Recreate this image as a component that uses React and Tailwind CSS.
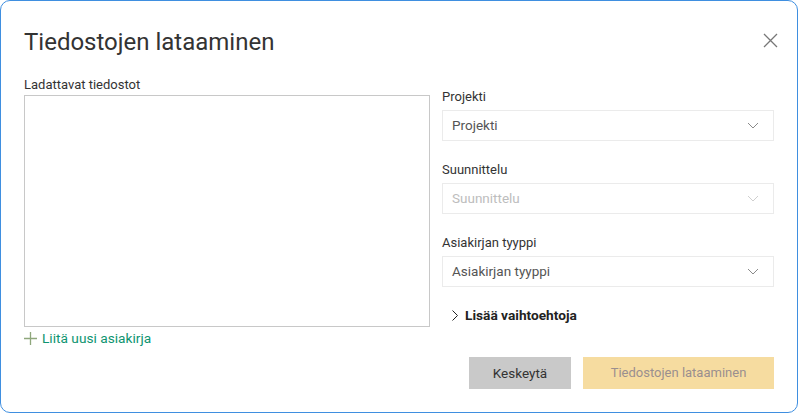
import React from 'react';

function Chevron({ className }) {
  return (
    <svg width="12" height="7" viewBox="0 0 12 7" className={className} fill="none">
      <path d="M1 1l5 5 5-5" stroke="currentColor" strokeWidth="1" />
    </svg>
  );
}

function SelectField({ label, placeholder, disabled }) {
  return (
    <div className="flex flex-col">
      <label className="text-[13px] leading-[16px] text-[#333] mb-[5px]">{label}</label>
      <div className="h-[31px] border border-[#ebebeb] flex items-center justify-between pl-[9px] pr-[14px] bg-white">
        <span className={`text-[13.5px] ${disabled ? 'text-[#bdbdbd]' : 'text-[#555]'}`}>{placeholder}</span>
        <Chevron className={disabled ? 'text-[#cfcfcf]' : 'text-[#8a8a8a]'} />
      </div>
    </div>
  );
}

export default function App() {
  return (
    <div className="w-[798px] h-[413px] bg-white" style={{ fontFamily: 'Roboto, "Noto Sans", sans-serif' }}>
      <div className="w-full h-full border border-[#3f8fe0] rounded-[10px] flex flex-col px-[23px]">
        {/* Header */}
        <div className="flex justify-between pt-[25px] h-[76px] items-start">
          <h1 className="text-[24px] leading-[32px] text-[#333]">Tiedostojen lataaminen</h1>
          <button className="mt-[7px] mr-[-4px] text-[#777]">
            <svg width="15" height="15" viewBox="0 0 15 15" fill="none">
              <path d="M1 1l13 13M14 1L1 14" stroke="currentColor" strokeWidth="1.3" />
            </svg>
          </button>
        </div>

        {/* Body */}
        <div className="flex gap-[12px]">
          <div className="w-[406px] flex flex-col">
            <label className="text-[13px] leading-[16px] text-[#333] mb-[2px]">Ladattavat tiedostot</label>
            <div className="h-[232px] border border-[#c8c8c8]"></div>
            <button className="flex items-center gap-[5px] mt-[3px] text-[13.7px] leading-[16px] text-[#0e9470]">
              <svg width="13" height="13" viewBox="0 0 13 13" fill="none">
                <path d="M6.5 0v13M0 6.5h13" stroke="#8fa77c" strokeWidth="1.3" />
              </svg>
              Liitä uusi asiakirja
            </button>
          </div>

          <div className="flex-1 flex flex-col pt-[12px] gap-[21px]">
            <SelectField label="Projekti" placeholder="Projekti" />
            <SelectField label="Suunnittelu" placeholder="Suunnittelu" disabled />
            <SelectField label="Asiakirjan tyyppi" placeholder="Asiakirjan tyyppi" />
            <button className="flex items-center gap-[7px] pl-[10px] mt-[-3px] text-[13.7px] font-bold text-[#222]">
              <svg width="6" height="11" viewBox="0 0 6 11" fill="none">
                <path d="M0.5 0.5l5 5-5 5" stroke="currentColor" strokeWidth="1" />
              </svg>
              Lisää vaihtoehtoja
            </button>
          </div>
        </div>

        {/* Footer */}
        <div className="flex justify-end gap-[12px] mt-auto mb-[23px]">
          <button className="w-[102px] h-[32px] bg-[#c9c9c9] text-[13.5px] text-[#333]">Keskeytä</button>
          <button className="w-[191px] h-[32px] bg-[#f6dca0] text-[13px] text-[#9a8f8f]">Tiedostojen lataaminen</button>
        </div>
      </div>
    </div>
  );
}
